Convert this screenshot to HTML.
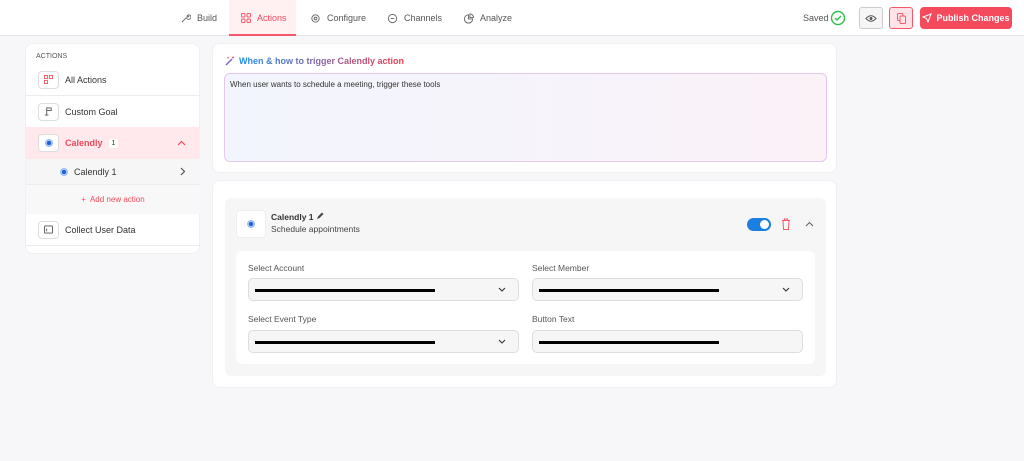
<!DOCTYPE html><html><head><style>
*{box-sizing:border-box;margin:0;padding:0}
body{width:1024px;height:461px;background:#f7f7f9;font-family:"Liberation Sans",sans-serif;font-size:9px;color:#333;position:relative;overflow:hidden}
.top{position:absolute;left:0;top:0;width:1024px;height:36px;background:#fff;border-bottom:1px solid #e6e6e6}
.nav{position:absolute;top:0;height:36px;display:flex;align-items:center;gap:6px;color:#555;font-size:9px}
.abs{position:absolute}
.card{position:absolute;background:#fff;border-radius:8px;border:1px solid #f0f0f0}
.row{position:absolute;left:0;width:174px;display:flex;align-items:center;border-bottom:1px solid #ececec}
.ic{width:21px;height:18px;border:1px solid #ddd;border-radius:4px;background:#fff;margin-left:12px;margin-right:6px;display:flex;align-items:center;justify-content:center}
.cal{width:8px;height:8px;border-radius:50%;background:#1a5fd6;border:2px solid #9dc0f5}
.inp{position:absolute;height:23px;border:1px solid #ddd;border-radius:5px;background:#f6f6f6}
.bar{position:absolute;left:6px;top:10px;height:3px;background:#000}
.lbl{position:absolute;font-size:8.5px;color:#555}
.chev{position:absolute;right:12px;top:8px}
</style></head><body>
<div class="top">
<div class="nav" style="left:180px"><svg width="11" height="11" viewBox="0 0 12 12"><path d="M2 10l5-5M7 5a2.5 2.5 0 1 0 2-3l-1.5 1.5 1 1L10 3" stroke="#666" fill="none" stroke-width="1"/></svg>Build</div>
<div class="abs" style="left:229px;top:0;width:67px;height:36px;background:#fff1f2;border-bottom:2px solid #f4586a"></div>
<div class="nav" style="left:241px;color:#f04a5c"><svg width="10" height="10" viewBox="0 0 10 10" fill="none" stroke="#f4586a" stroke-width="1"><rect x="0.5" y="0.5" width="3.5" height="3.5" rx="1"/><rect x="6" y="0.5" width="3.5" height="3.5" rx="1"/><rect x="0.5" y="6" width="3.5" height="3.5" rx="1"/><rect x="6" y="6" width="3.5" height="3.5" rx="1"/></svg>Actions</div>
<div class="nav" style="left:310px"><svg width="11" height="11" viewBox="0 0 12 12"><circle cx="6" cy="6" r="4" stroke="#666" fill="none"/><circle cx="6" cy="6" r="1.5" stroke="#666" fill="none"/></svg>Configure</div>
<div class="nav" style="left:387px"><svg width="11" height="11" viewBox="0 0 12 12"><circle cx="6" cy="6" r="4.5" stroke="#666" fill="none"/><path d="M4 6h4" stroke="#666"/></svg>Channels</div>
<div class="nav" style="left:463px"><svg width="11" height="11" viewBox="0 0 12 12"><path d="M6 2a4.5 4.5 0 1 0 4.5 4.5H6z" stroke="#666" fill="none"/><path d="M7.5 1v4h4a4 4 0 0 0-4-4z" stroke="#666" fill="none"/></svg>Analyze</div>
<div class="abs" style="left:803px;top:13px;color:#555">Saved</div>
<svg class="abs" style="left:830px;top:10px" width="16" height="16" viewBox="0 0 16 16"><circle cx="8" cy="8" r="6.5" stroke="#2fbf4f" stroke-width="1.4" fill="none"/><path d="M5 8l2 2 4-4" stroke="#2fbf4f" stroke-width="1.4" fill="none"/></svg>
<div class="abs" style="left:859px;top:7px;width:24px;height:22px;border:1px solid #ccc;border-radius:3px;background:#f6f6f6;display:flex;align-items:center;justify-content:center"><svg width="12" height="9" viewBox="0 0 12 9"><path d="M1 4.5Q6-1 11 4.5Q6 10 1 4.5z" stroke="#555" fill="none"/><circle cx="6" cy="4.5" r="1.5" fill="#555"/></svg></div>
<div class="abs" style="left:889px;top:7px;width:24px;height:22px;border:1px solid #f4586a;border-radius:3px;background:#ffe3e6;display:flex;align-items:center;justify-content:center"><svg width="9" height="11" viewBox="0 0 9 11"><rect x="0.5" y="0.5" width="5.5" height="7" rx="1" stroke="#f4586a" fill="none"/><rect x="3" y="3" width="5.5" height="7.5" rx="1" stroke="#f4586a" fill="#ffe3e6"/></svg></div>
<div class="abs" style="left:920px;top:7px;width:92px;height:22px;border-radius:4px;background:#f5495c;color:#fff;font-weight:bold;font-size:9px;display:flex;align-items:center;justify-content:center;gap:4px"><svg width="10" height="10" viewBox="0 0 10 10"><path d="M1 4l8-3-3 8-1.5-3.5z" stroke="#fff" fill="none"/></svg>Publish Changes</div>
</div>

<div class="card" style="left:25px;top:43px;width:175px;height:211px">
<div class="abs" style="left:10px;top:9px;font-size:7px;color:#555">ACTIONS</div>
<div class="row" style="top:20px;height:32px"><div class="ic"><svg width="9" height="9" viewBox="0 0 10 10" fill="none" stroke="#f4586a"><rect x="0.5" y="0.5" width="3.5" height="3.5"/><rect x="6" y="0.5" width="3.5" height="3.5"/><rect x="0.5" y="6" width="3.5" height="3.5"/></svg></div>All Actions</div>
<div class="row" style="top:52px;height:32px"><div class="ic"><svg width="9" height="9" viewBox="0 0 10 10" fill="none" stroke="#555"><path d="M3 9V1h5v3H3M1 9h4"/></svg></div>Custom Goal</div>
<div class="row" style="top:83px;height:32px;background:#ffe9ec;border:none"><div class="ic"><div class="cal"></div></div><b style="color:#f04a5c">Calendly</b><span style="margin-left:6px;background:#fff;padding:1px 3px;font-size:7px;border-radius:2px">1</span><svg style="position:absolute;right:14px" width="9" height="6" viewBox="0 0 9 6"><path d="M1 5l3.5-3.5L8 5" stroke="#f04a5c" fill="none" stroke-width="1.2"/></svg></div>
<div class="row" style="top:115px;height:26px;background:#f6f6f6"><div class="cal" style="margin-left:34px;margin-right:6px"></div>Calendly 1<svg style="position:absolute;right:14px" width="6" height="9" viewBox="0 0 6 9"><path d="M1 1l3.5 3.5L1 8" stroke="#555" fill="none" stroke-width="1.2"/></svg></div>
<div class="row" style="top:141px;height:29px;background:#f8f8f8;justify-content:center;color:#f04a5c;font-size:8px;border:none">+&nbsp; Add new action</div>
<div class="row" style="top:170px;height:32px"><div class="ic"><svg width="9" height="9" viewBox="0 0 10 10" fill="none" stroke="#555"><rect x="0.5" y="1" width="9" height="8" rx="1"/><path d="M3 4v3"/></svg></div>Collect User Data</div>
</div>

<div class="card" style="left:212px;top:43px;width:625px;height:130px">
<div class="abs" style="left:12px;top:12px;font-weight:bold;font-size:9px;display:flex;gap:4px;align-items:center"><svg width="10" height="10" viewBox="0 0 10 10"><path d="M1 9l6-6" stroke="#7a62d8" stroke-width="1.4"/><path d="M8 0.5v2M7 1.5h2M3 1v1.5M2.3 1.7h1.5" stroke="#f0364d" stroke-width="0.8"/></svg><span style="background:linear-gradient(90deg,#1a8ef0,#f0364d);-webkit-background-clip:text;color:transparent">When &amp; how to trigger Calendly action</span></div>
<div class="abs" style="left:11px;top:29px;width:603px;height:89px;border-radius:6px;border:1px solid #e5c8f0;background:linear-gradient(90deg,#f2f5fd,#fbf2f8)"><div style="padding:6px 5px;font-size:8px;color:#333">When user wants to schedule a meeting, trigger these tools</div></div>
</div>

<div class="card" style="left:212px;top:180px;width:625px;height:208px">
<div class="abs" style="left:12px;top:17px;width:601px;height:178px;background:#f6f6f6;border-radius:6px">
<div class="abs" style="left:11px;top:12px;width:30px;height:28px;background:#fff;border-radius:4px;border:1px solid #eee;display:flex;align-items:center;justify-content:center"><div class="cal"></div></div>
<div class="abs" style="left:46px;top:14px;font-weight:bold;font-size:8.5px">Calendly 1 <svg width="8" height="8" viewBox="0 0 8 8"><path d="M1 7l1-2.5L6 .5 7.5 2 3.5 6z" fill="#444"/></svg></div>
<div class="abs" style="left:46px;top:26px;font-size:8.5px;color:#444">Schedule appointments</div>
<div class="abs" style="left:522px;top:20px;width:24px;height:13px;border-radius:7px;background:#1a7fe0"><div style="position:absolute;right:2px;top:2px;width:9px;height:9px;border-radius:50%;background:#fff"></div></div>
<svg class="abs" style="left:556px;top:20px" width="10" height="12" viewBox="0 0 10 12" fill="none" stroke="#f4586a"><path d="M1 2.5h8M3.5 2.5V1h3v1.5M2 2.5l.5 9h5l.5-9"/></svg>
<svg class="abs" style="left:580px;top:23px" width="9" height="6" viewBox="0 0 9 6"><path d="M1 5l3.5-3.5L8 5" stroke="#666" fill="none" stroke-width="1.1"/></svg>
<div class="abs" style="left:11px;top:53px;width:579px;height:113px;background:#fff;border-radius:6px">
<div class="lbl" style="left:12px;top:12px">Select Account</div>
<div class="inp" style="left:12px;top:27px;width:271px"><div class="bar" style="width:180px"></div><svg class="chev" width="8" height="5" viewBox="0 0 8 5"><path d="M1 1l3 3 3-3" stroke="#333" fill="none" stroke-width="1.1"/></svg></div>
<div class="lbl" style="left:296px;top:12px">Select Member</div>
<div class="inp" style="left:296px;top:27px;width:271px"><div class="bar" style="width:180px"></div><svg class="chev" width="8" height="5" viewBox="0 0 8 5"><path d="M1 1l3 3 3-3" stroke="#333" fill="none" stroke-width="1.1"/></svg></div>
<div class="lbl" style="left:12px;top:63px">Select Event Type</div>
<div class="inp" style="left:12px;top:79px;width:271px"><div class="bar" style="width:180px"></div><svg class="chev" width="8" height="5" viewBox="0 0 8 5"><path d="M1 1l3 3 3-3" stroke="#333" fill="none" stroke-width="1.1"/></svg></div>
<div class="lbl" style="left:296px;top:63px">Button Text</div>
<div class="inp" style="left:296px;top:79px;width:271px"><div class="bar" style="width:180px"></div></div>
</div>
</div>
</div>
</body></html>
